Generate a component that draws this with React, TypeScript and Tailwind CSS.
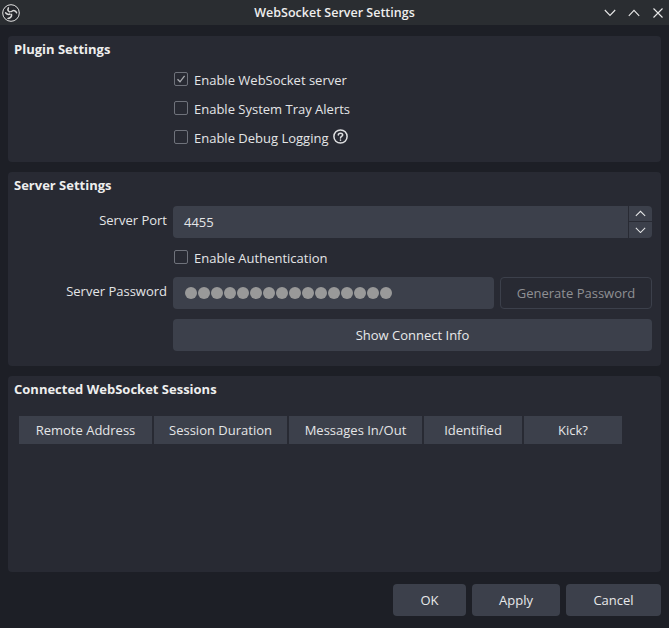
import React from "react";

function Check({ checked, label, extra }: { checked?: boolean; label: string; extra?: React.ReactNode }) {
  return (
    <div className="flex h-[20px] items-center">
      <div className="mb-[2px] flex h-[14px] w-[14px] items-center justify-center rounded-[2px] border border-[#6f727b]">
        {checked && (
          <svg width="10" height="10" viewBox="0 0 10 10" fill="none" stroke="#a9abb0" strokeWidth="1.3">
            <path d="M1.5 5.2 L4 7.8 L8.6 1.8" />
          </svg>
        )}
      </div>
      <span className="ml-[6px] leading-[20px] text-[#e4e5e7]">{label}</span>
      {extra}
    </div>
  );
}

function Help() {
  return (
    <svg className="ml-[5px] mb-[3px]" width="15" height="15" viewBox="0 0 15 15" fill="none" stroke="#dedfe1" strokeWidth="1.5" strokeLinecap="round">
      <circle cx="7.5" cy="7.5" r="6.6" />
      <path d="M5.3 6 C5.3 3.5 9.7 3.5 9.7 6 C9.7 7.5 7.5 7.4 7.5 9" />
      <path d="M7.5 11 L7.5 11.2" />
    </svg>
  );
}

function Chevron({ up, size = 13 }: { up?: boolean; size?: number }) {
  return (
    <svg width={size} height={size * 0.62} viewBox="0 0 13 8" fill="none" stroke="#e8e9ea" strokeWidth="1.2">
      <path d={up ? "M1 7 L6.5 1.5 L12 7" : "M1 1 L6.5 6.5 L12 1"} />
    </svg>
  );
}

function Logo() {
  return (
    <svg className="ml-[2px]" width="18" height="18" viewBox="0 0 18 18" fill="none">
      <circle cx="9" cy="9" r="8.3" stroke="#e2e2e2" strokeWidth="1" fill="#24262b" />
      <g stroke="#d8d8d8" strokeWidth="1.5" strokeLinecap="round" fill="none">
        <path d="M9 8 C6.5 8 5.2 6.2 6.4 3.8" />
        <path d="M9 8 C11.4 5.6 13.8 6.6 14.6 8.8" />
        <path d="M9.4 9.6 C10.2 12.4 8.4 14.2 6 14.4" />
        <path d="M8.6 9.6 C6.8 11 4.8 10.4 3.6 8.8" />
      </g>
      <circle cx="9" cy="9" r="1" fill="#24262b" />
    </svg>
  );
}

const headers: [string, string][] = [
  ["Remote Address", "w-[133px]"],
  ["Session Duration", "w-[133px]"],
  ["Messages In/Out", "w-[133px]"],
  ["Identified", "w-[98px]"],
  ["Kick?", "w-[98px]"],
];

export default function App() {
  return (
    <div className="flex h-[628px] w-[669px] flex-col overflow-hidden bg-[#1d1f26] text-[13px] text-[#e4e5e7] [font-family:'Open_Sans',sans-serif]">
      {/* Title bar */}
      <div className="relative flex h-[25px] items-center bg-[#2a2d31]">
        <Logo />
        <span className="absolute left-0 right-0 text-center text-[12.5px] font-semibold leading-[25px] text-[#eeeeee]">WebSocket Server Settings</span>
        <div className="ml-auto mr-[6px] flex items-center">
          <svg className="mr-[12px]" width="12" height="8" viewBox="0 0 12 8" fill="none" stroke="#e8e8e8" strokeWidth="1.1"><path d="M0.8 1 L6 6.4 L11.2 1" /></svg>
          <svg className="mr-[13px]" width="12" height="8" viewBox="0 0 12 8" fill="none" stroke="#e8e8e8" strokeWidth="1.1"><path d="M0.8 6.8 L6 1.4 L11.2 6.8" /></svg>
          <svg width="10" height="10" viewBox="0 0 10 10" fill="none" stroke="#e8e8e8" strokeWidth="1.1"><path d="M0.5 0.5 L9.5 9.5 M9.5 0.5 L0.5 9.5" /></svg>
        </div>
      </div>

      <div className="flex flex-1 flex-col px-[8px] pt-[11px]">
        {/* Plugin Settings */}
        <section className="h-[126px] rounded-[4px] bg-[#282a33] pl-[6px] pt-[4px]">
          <h2 className="text-[13px] font-bold leading-[18px] text-[#eeeeee]">Plugin Settings</h2>
          <div className="ml-[160px] mt-[12px] flex flex-col gap-[9px]">
            <Check checked label="Enable WebSocket server" />
            <Check label="Enable System Tray Alerts" />
            <Check label="Enable Debug Logging" extra={<Help />} />
          </div>
        </section>

        {/* Server Settings */}
        <section className="mt-[10px] h-[194px] rounded-[4px] bg-[#282a33] pl-[6px] pr-[9px] pt-[4px]">
          <h2 className="text-[13px] font-bold leading-[18px] text-[#eeeeee]">Server Settings</h2>
          <div className="mt-[12px] flex h-[32px]">
            <label className="w-[159px] pr-[6px] text-right leading-[28px] text-[#e4e5e7]">Server Port</label>
            <div className="flex h-[32px] flex-1 rounded-[4px] bg-[#3c404b]">
              <span className="flex-1 pl-[11px] leading-[32px]">4455</span>
              <div className="flex w-[24px] flex-col border-l border-[#282a33]">
                <div className="flex h-[16px] items-center justify-center border-b border-[#282a33]"><Chevron up size={11} /></div>
                <div className="flex h-[16px] items-center justify-center"><Chevron size={11} /></div>
              </div>
            </div>
          </div>
          <div className="ml-[160px] mt-[10px]"><Check label="Enable Authentication" /></div>
          <div className="mt-[9px] flex h-[32px]">
            <label className="w-[159px] pr-[6px] text-right leading-[28px] text-[#e4e5e7]">Server Password</label>
            <div className="flex h-[32px] w-[321px] items-center gap-[1.5px] rounded-[4px] bg-[#3c404b] pl-[12px]">
              {Array.from({ length: 16 }).map((_, i) => (
                <span key={i} className="h-[11.5px] w-[11.5px] rounded-full bg-[#999999]" />
              ))}
            </div>
            <button className="ml-[6px] h-[32px] flex-1 rounded-[4px] border border-[#3c404b] bg-[#282a33] pt-[1px] text-[#8f9094]">Generate Password</button>
          </div>
          <div className="ml-[159px] mt-[10px]">
            <button className="h-[32px] w-full rounded-[4px] bg-[#3c404b] pt-[1px] text-[#e8e9ea]">Show Connect Info</button>
          </div>
        </section>

        {/* Sessions */}
        <section className="mt-[10px] h-[196px] rounded-[4px] bg-[#282a33] pl-[6px] pt-[4px]">
          <h2 className="text-[13px] font-bold leading-[18px] text-[#eeeeee]">Connected WebSocket Sessions</h2>
          <div className="ml-[5px] mt-[18px] flex h-[28px]">
            {headers.map(([h, w]) => (
              <div key={h} className={`${w} mr-[2px] flex items-center justify-center bg-[#3c404b] pt-[1px] text-[#e4e5e7] last:mr-0`}>{h}</div>
            ))}
          </div>
        </section>

        {/* Footer */}
        <div className="mt-[12px] flex justify-end gap-[6px]">
          <button className="h-[32px] w-[73px] rounded-[4px] bg-[#3c404b] pt-[1px] text-[#e8e9ea]">OK</button>
          <button className="h-[32px] w-[88px] rounded-[4px] bg-[#3c404b] pt-[1px] text-[#e8e9ea]">Apply</button>
          <button className="h-[32px] w-[95px] rounded-[4px] bg-[#3c404b] pt-[1px] text-[#e8e9ea]">Cancel</button>
        </div>
      </div>
    </div>
  );
}
